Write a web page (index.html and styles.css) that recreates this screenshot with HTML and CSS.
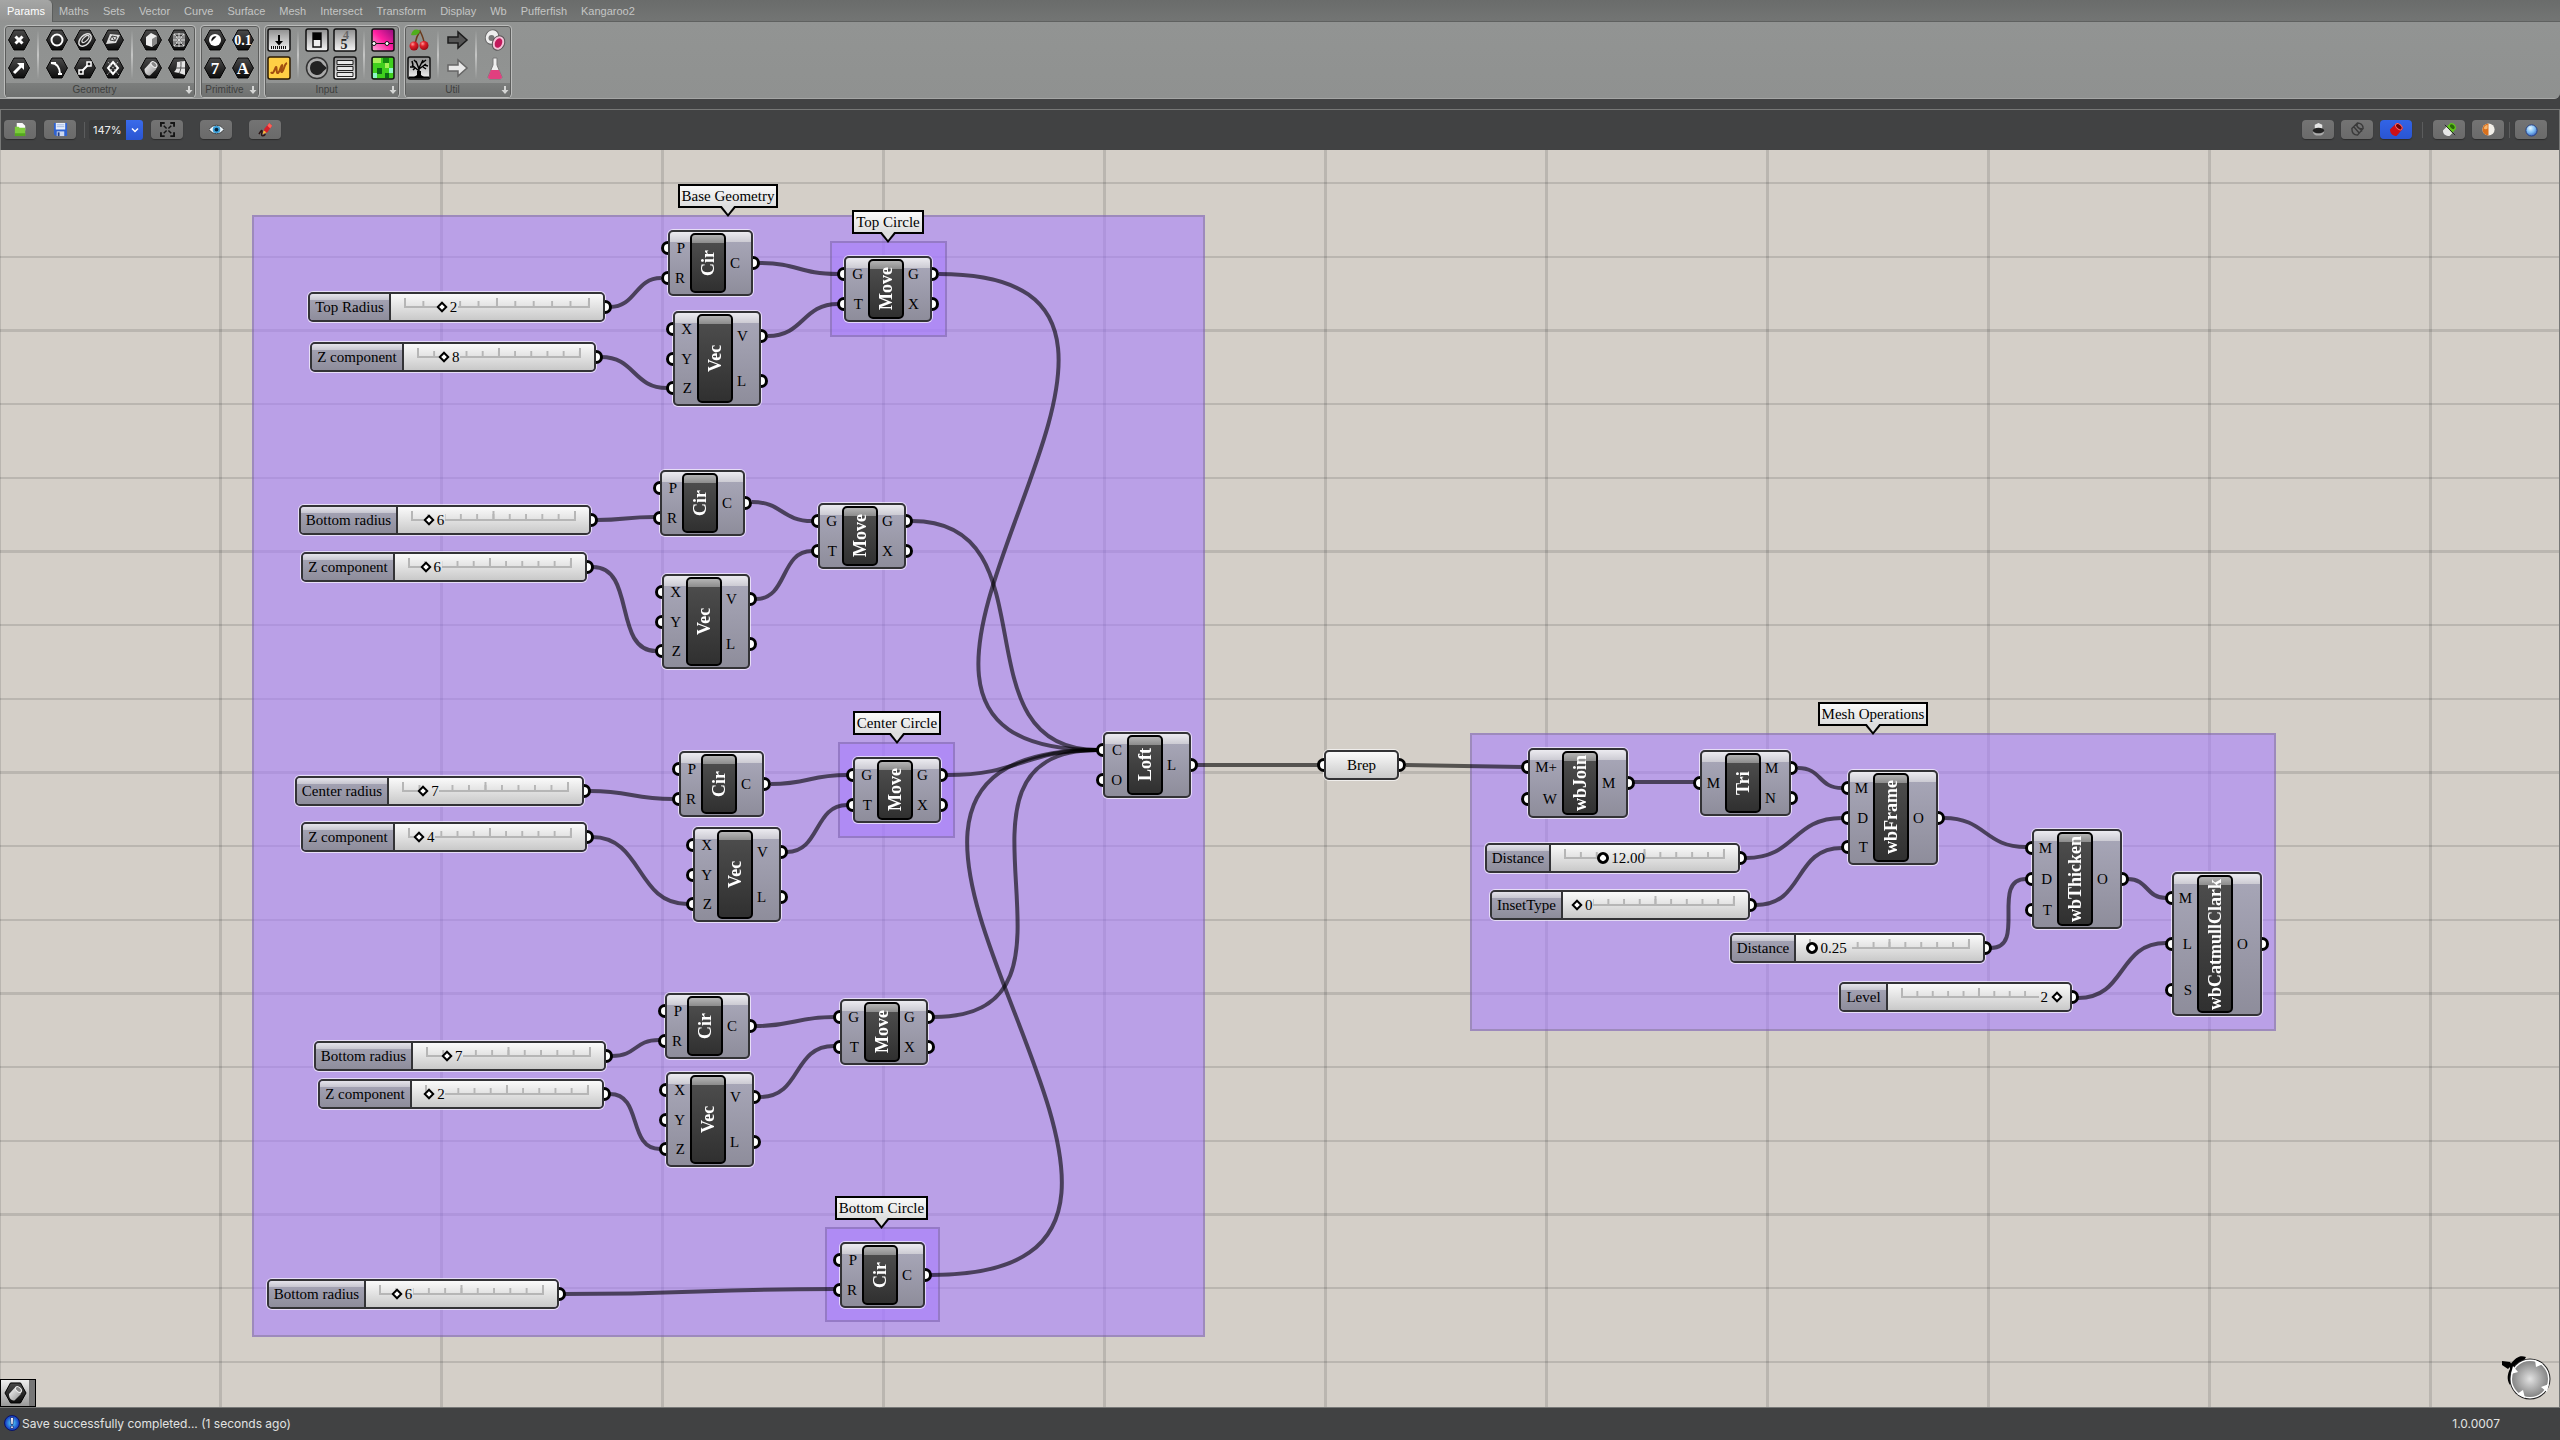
FILE: index.html
```html
<!DOCTYPE html>
<html lang="en">
<head>
<meta charset="utf-8">
<title>Grasshopper</title>
<link rel="stylesheet" href="styles.css">
</head>
<body>
<svg class="defs" aria-hidden="true">
  <defs>
    <linearGradient id="g-hex" x1="0" y1="0" x2="0" y2="1"><stop offset="0" stop-color="#4a4a4a"/><stop offset="1" stop-color="#0c0c0c"/></linearGradient>
    <linearGradient id="g-metal" x1="0" y1="0" x2="1" y2="1"><stop offset="0" stop-color="#fff"/><stop offset="1" stop-color="#8a8a8a"/></linearGradient>
    <linearGradient id="g-box" x1="0" y1="0" x2="0" y2="1"><stop offset="0" stop-color="#8e8e8e"/><stop offset="1" stop-color="#f6f6f6"/></linearGradient>
    <linearGradient id="g-pink" x1="0" y1="1" x2="1" y2="0"><stop offset="0" stop-color="#ffb0dc"/><stop offset=".5" stop-color="#ff1fa0"/><stop offset="1" stop-color="#8b0d7c"/></linearGradient>
    <radialGradient id="g-cherry" cx=".35" cy=".3" r=".8"><stop offset="0" stop-color="#ff9a9a"/><stop offset=".35" stop-color="#e0202a"/><stop offset="1" stop-color="#8c0510"/></radialGradient>
    <radialGradient id="g-blue" cx=".4" cy=".3" r=".8"><stop offset="0" stop-color="#e4f6ff"/><stop offset=".5" stop-color="#7dbcf4"/><stop offset="1" stop-color="#2c4fae"/></radialGradient>
    <radialGradient id="g-info"><stop offset="0" stop-color="#58e0ff"/><stop offset="1" stop-color="#1030c0"/></radialGradient>
    <radialGradient id="g-dial"><stop offset="0" stop-color="#e2e2e2"/><stop offset="1" stop-color="#858585"/></radialGradient>
    <symbol id="hex" viewBox="0 0 24 24"><path d="M6.500 1.500h11L23.300 12l-5.800 10.500h-11L.7 12z" fill="#b9bab9"/><path d="M7 2h10l5.500 10L17 22H7L1.500 12z" fill="url(#g-hex)" stroke="#000"/></symbol>
    <symbol id="barrel" viewBox="0 0 24 24"><path d="M5.500 13l6.500-7 6 4.500-1 3-6 6c-4 0-5.500-2.500-5.500-6.500z" fill="url(#g-metal)"/><ellipse cx="15" cy="8.500" rx="3.500" ry="2.200" transform="rotate(42 15 8.500)" fill="#888" stroke="#eee"/></symbol>
    <symbol id="tile" viewBox="0 0 24 24"><rect x="1" y="1" width="22" height="22" rx="2" fill="url(#g-box)" stroke="#111" stroke-width="1.500"/></symbol>
    <symbol id="more" viewBox="0 0 8 8"><path d="M3 0h2v4h2.500L4 8 .5 4H3z" fill="#d5d6d5"/></symbol>
  </defs>
</svg>

<header class="ribbon">
  <nav class="tabs">
    <button class="tab active">Params</button><button class="tab">Maths</button><button class="tab">Sets</button><button class="tab">Vector</button><button class="tab">Curve</button><button class="tab">Surface</button><button class="tab">Mesh</button><button class="tab">Intersect</button><button class="tab">Transform</button><button class="tab">Display</button><button class="tab">Wb</button><button class="tab">Pufferfish</button><button class="tab">Kangaroo2</button>
  </nav>
  <div class="panels">
    <section class="panel">
      <div class="tools">
        <div class="tool-cols">
          <button aria-label="Point"><svg viewBox="0 0 24 24"><use href="#hex"/><path d="M8.500 8.500l7 7m0-7l-7 7" stroke="#fff" stroke-width="3"/></svg></button>
          <button aria-label="Vector"><svg viewBox="0 0 24 24"><use href="#hex"/><path d="M7 17l7-7" stroke="#fff" stroke-width="3"/><path d="M10 7h7v7z" fill="#fff"/></svg></button>
        </div>
        <div class="tool-cols">
          <button aria-label="Circle"><svg viewBox="0 0 24 24"><use href="#hex"/><circle cx="12" cy="12" r="5.500" fill="none" stroke="#fff" stroke-width="2"/></svg></button>
          <button aria-label="Arc"><svg viewBox="0 0 24 24"><use href="#hex"/><path d="M6 7c6 0 9 5 9 11M6 7h5M13 18h4" fill="none" stroke="#fff" stroke-width="2"/></svg></button>
          <button aria-label="Curve"><svg viewBox="0 0 24 24"><use href="#hex"/><ellipse cx="12" cy="12" rx="7.500" ry="4.500" transform="rotate(-45 12 12)" fill="none" stroke="#ddd" stroke-width="1.500"/><ellipse cx="12.500" cy="11" rx="4.500" ry="2" transform="rotate(-45 12.500 11)" fill="none" stroke="#ddd" stroke-width="1.300"/></svg></button>
          <button aria-label="Line"><svg viewBox="0 0 24 24"><use href="#hex"/><path d="M8 16l8-8" stroke="#fff" stroke-width="2"/><path d="M6 14h4v4H6zM14 6h4v4h-4z" fill="#222" stroke="#fff" stroke-width="1.500"/></svg></button>
          <button aria-label="Plane"><svg viewBox="0 0 24 24"><use href="#hex"/><path d="M5 16l4-10 10 1-4 8z" fill="#ddd"/><path d="M9 12l2-4 5 1-2 4zM11 8l3 5" fill="none" stroke="#444"/></svg></button>
          <button aria-label="Rectangle"><svg viewBox="0 0 24 24"><use href="#hex"/><path d="M12 6l5 6-5 6-5-6z" fill="none" stroke="#fff" stroke-width="2"/><path d="M7 6l11 13M17 6L6 19" stroke="#aaa" stroke-dasharray="2 1"/></svg></button>
        </div>
        <div class="tool-cols">
          <button aria-label="Box"><svg viewBox="0 0 24 24"><use href="#hex"/><path d="M7 9l5-4 6 3v7l-5 4-6-2z" fill="#eee"/><path d="M13 11l5-3v7l-5 4z" fill="#888"/></svg></button>
          <button aria-label="Brep"><svg viewBox="0 0 24 24"><use href="#hex"/><use href="#barrel"/></svg></button>
          <button aria-label="Mesh"><svg viewBox="0 0 24 24"><use href="#hex"/><path d="M7 6h10v12H7zM12 5v14M6 12h12M7 6l10 12M17 6L7 18M9 9h6v6H9z" fill="none" stroke="#ddd"/></svg></button>
          <button aria-label="Surface"><svg viewBox="0 0 24 24"><use href="#hex"/><path d="M7 16c3-2 3-7 3-10l8-1v14l-6-2z" fill="#e4e4e4"/><path d="M14 6c0 5 0 9-2 11M9 12h9" fill="none" stroke="#555"/></svg></button>
        </div>
      </div>
      <h2>Geometry</h2><svg class="more"><use href="#more"/></svg>
    </section>
    <section class="panel">
      <div class="tools">
        <div class="tool-cols">
          <button aria-label="Boolean"><svg viewBox="0 0 24 24"><use href="#hex"/><circle cx="12" cy="12" r="6" fill="#fff"/><path d="M8.500 13.500a4 4 0 0 1 5-5z" fill="#111"/></svg></button>
          <button aria-label="Integer"><svg viewBox="0 0 24 24"><use href="#hex"/><text x="12" y="18" class="glyph">7</text></svg></button>
          <button aria-label="Number"><svg viewBox="0 0 24 24"><use href="#hex"/><text x="12" y="17" class="glyph small">0.1</text></svg></button>
          <button aria-label="Text"><svg viewBox="0 0 24 24"><use href="#hex"/><text x="12" y="18" class="glyph">A</text></svg></button>
        </div>
      </div>
      <h2>Primitive</h2><svg class="more"><use href="#more"/></svg>
    </section>
    <section class="panel">
      <div class="tools">
        <div class="tool-cols">
          <button aria-label="Button"><svg viewBox="0 0 24 24"><use href="#tile"/><path d="M11 7h2v6h3l-4 4.500L8 13h3z"/><path d="M4 19.500h16" stroke="#111" stroke-width="3" stroke-dasharray="1 1"/></svg></button>
          <button aria-label="Panel"><svg viewBox="0 0 24 24"><rect x="1" y="1" width="22" height="22" rx="2" fill="#ffcf45" stroke="#2b1a00" stroke-width="1.500"/><path d="M4 16c2 4 4-4 5-5s0 7 2 6 3-8 4-8-2 8 0 7 2-8 5-9" fill="none" stroke="#a14e10" stroke-width="2"/></svg></button>
        </div>
        <div class="tool-cols">
          <button aria-label="Toggle"><svg viewBox="0 0 24 24"><use href="#tile"/><rect x="8" y="5" width="8" height="14" fill="#eee" stroke="#111" stroke-width="1.500"/><path d="M8 5h8v7H8z"/></svg></button>
          <button aria-label="Knob"><svg viewBox="0 0 24 24"><circle cx="12" cy="12" r="10.500" fill="#aaa" stroke="#333" stroke-width="1.500"/><path d="M5 12a7 7 0 0 1 13-3.500l4 3.500-4 3.500A7 7 0 0 1 5 12z" fill="#222"/></svg></button>
          <button aria-label="Digit scroller"><svg viewBox="0 0 24 24"><use href="#tile"/><text x="13" y="11" class="glyph dim">4</text><text x="11" y="21" class="glyph dark">5</text></svg></button>
          <button aria-label="Value list"><svg viewBox="0 0 24 24"><use href="#tile"/><path d="M4 4.500h16v4H4zM4 10.500h16v4H4zM4 16.500h16v4H4z" fill="#e9e9e9" stroke="#222"/></svg></button>
        </div>
        <div class="tool-cols">
          <button aria-label="Gradient"><svg viewBox="0 0 24 24"><rect x="1" y="1" width="22" height="22" rx="2" fill="url(#g-pink)" stroke="#111" stroke-width="1.500"/><path d="M2 15.500h20" stroke="#111"/><circle cx="3" cy="15.500" r="2" fill="#fff" stroke="#111"/><circle cx="16" cy="15.500" r="2" fill="#fff" stroke="#111"/></svg></button>
          <button aria-label="Colour swatch"><svg viewBox="0 0 24 24"><rect x="1" y="1" width="22" height="22" rx="2" fill="#3fcf1e" stroke="#111" stroke-width="1.500"/><path d="M2 2h8v5H2zM14 7h4v5h-4z" fill="#a5ef58"/><path d="M6 12h5v6H6zM14 17h4v5h-4z" fill="#0b6b14"/><path d="M18 12h4v5h-4zM2 17h4v5H2z" fill="#8ef7c8"/><path d="M12 2h6v5h-6z" fill="#138a10"/></svg></button>
        </div>
      </div>
      <h2>Input</h2><svg class="more"><use href="#more"/></svg>
    </section>
    <section class="panel">
      <div class="tools">
        <div class="tool-cols">
          <button aria-label="Cherry picker"><svg viewBox="0 0 24 24"><path d="M8 16C9 10 11 6 13 3c2 4 4 8 4 12" fill="none" stroke="#6a3a1c" stroke-width="1.500"/><path d="M13 3C9 0 5 2 4 7c4 1 8 0 9-4z" fill="#4fae1d"/><circle cx="7" cy="18" r="4.500" fill="url(#g-cherry)"/><circle cx="17" cy="17.500" r="4.500" fill="url(#g-cherry)"/></svg></button>
          <button aria-label="Param viewer"><svg viewBox="0 0 24 24"><use href="#tile"/><path d="M12 21v-8M12 15L5 9M12 13l7-5M12 13L9 5M12 12l4-8M7 11H3M6 9L5 5M17 9l4 1M15 7l4-3M10 7L7 4M8 12l-2 2M16 11l3 2" fill="none" stroke="#000" stroke-width="1.500"/><path d="M10 15h4v4l3 2H7l3-2z"/><path d="M2 21.500h20" stroke="#000" stroke-width="2"/></svg></button>
        </div>
        <div class="tool-cols">
          <button aria-label="Galapagos"><svg viewBox="0 0 24 24"><path d="M3 9h10V4l9 8-9 8v-5H3z" fill="#555" stroke="#1c1c1c" stroke-width="1.500"/></svg></button>
          <button aria-label="Relay"><svg viewBox="0 0 24 24"><path d="M3 9h10V4l9 8-9 8v-5H3z" fill="#e9e9e9" stroke="#666" stroke-width="1.500"/></svg></button>
        </div>
        <div class="tool-cols">
          <button aria-label="Cluster input"><svg viewBox="0 0 24 24"><ellipse cx="9" cy="9" rx="6.500" ry="7.500" transform="rotate(30 9 9)" fill="#eee" stroke="#666"/><circle cx="8.500" cy="10" r="3" fill="#777"/><ellipse cx="15.500" cy="15" rx="6" ry="7.500" transform="rotate(25 15.500 15)" fill="#f3c3d8" stroke="#555"/><ellipse cx="15.500" cy="15" rx="3.500" ry="5" transform="rotate(25 15.500 15)" fill="#c2185b"/></svg></button>
          <button aria-label="Fitness"><svg viewBox="0 0 24 24"><path d="M10 2h4v7l5 12c0 1-1 2-2 2H7c-1 0-2-1-2-2l5-12z" fill="#eee" stroke="#777"/><path d="M8 14h8l3 7c0 1-1 2-2 2H7c-1 0-2-1-2-2z" fill="#e0407f"/></svg></button>
        </div>
      </div>
      <h2>Util</h2><svg class="more"><use href="#more"/></svg>
    </section>
  </div>
</header>

<div class="toolbar">
  <button class="tb" aria-label="Open"><svg viewBox="0 0 16 16"><path d="M4 1h6l3 3v5H4z" fill="#fafafa"/><path d="M2 5h4l1 1h6v9H2z" fill="#7dcc3c"/><path d="M2 12h11v3H2z" fill="#55a81f"/></svg></button>
  <button class="tb" aria-label="Save"><svg viewBox="0 0 16 16"><path d="M1 1h14v14H3l-2-2z" fill="#2f62d0"/><path d="M3 1h10v7H3z" fill="#e8eefb"/><path d="M4 3h8M4 5h8" stroke="#9db4e0"/><path d="M4 10h8v5H4z" fill="#ccd8f0"/><path d="M5 11h2v4H5z" fill="#203c86"/></svg></button>
  <span class="sep"></span>
  <span class="zoom"><select aria-label="Zoom"><option>147%</option></select><span class="chev"><svg viewBox="0 0 10 10"><path d="M2 3.500l3 3 3-3" fill="none" stroke="#fff" stroke-width="1.500"/></svg></span></span>
  <button class="tb" aria-label="Zoom extents"><svg viewBox="0 0 16 16"><path d="M1 5V1h4M11 1h4v4M15 11v4h-4M5 15H1v-4" fill="none" stroke="#151515" stroke-width="2"/><path d="M4 4l3 3m2 2l3 3m0-8L9 7M7 9l-3 3" stroke="#151515" stroke-width="1.500"/></svg></button>
  <button class="tb gap" aria-label="Preview"><svg viewBox="0 0 16 16"><path d="M0 8c4-6 12-6 16 0-4 6-12 6-16 0z" fill="#eef6fb" stroke="#333"/><circle cx="8" cy="8" r="4" fill="#3b9fd8"/><circle cx="8" cy="8" r="2" fill="#06233a"/></svg></button>
  <button class="tb gap" aria-label="Sketch"><svg viewBox="0 0 16 16"><path d="M1 13c3-5 4-5 3-1s2 3 4 1" fill="none" stroke="#2a1414" stroke-width="1.500"/><path d="M5 13l2-6 5-6 3 3-5 7z" fill="#d4202a"/><path d="M12 1l3 3-2 3-3-3z" fill="#ff6258"/><path d="M5 13l1-4 3 2z" fill="#f2c23c"/></svg></button>
  <div class="views">
    <button class="tb" aria-label="No preview"><svg viewBox="0 0 16 16"><path d="M4 3l4-2 4 2v5H4z" fill="#e4e4e4"/><ellipse cx="8" cy="9" rx="6" ry="3" fill="#222"/><path d="M2 10c0 6 12 6 12 0-3 3-9 3-12 0z" fill="#aaa"/></svg></button>
    <button class="tb" aria-label="Wireframe preview"><svg viewBox="0 0 16 16"><path d="M2 7l6-6c3 0 6 2 6 6l-6 7c-4 0-6-3-6-7zM4 5l6 7M8 2c-2 3 2 6 5 5M6 3l7 7" fill="none" stroke="#3a3a3a" stroke-width="1.500"/></svg></button>
    <button class="tb on" aria-label="Shaded preview"><svg viewBox="0 0 16 16"><path d="M1 8l7-7c3 0 6 2 7 6l-7 8c-4 0-7-3-7-7z" fill="#cc1018"/><ellipse cx="10.500" cy="5" rx="4" ry="2.500" transform="rotate(42 10.500 5)" fill="#6e0408" stroke="#ff6a6a"/></svg></button>
    <span class="sep"></span>
    <button class="tb" aria-label="Selected only"><svg viewBox="0 0 16 16"><path d="M1 9l4-4 7 6-4 4c-4 0-7-2-7-6z" fill="#e6e6e6"/><path d="M5 5l4-4c4 0 6 2 6 6l-4 5z" fill="#5fc41c"/><ellipse cx="11" cy="5" rx="3" ry="2" transform="rotate(42 11 5)" fill="#2a6a08"/><path d="M3 3l11 11" stroke="#222"/></svg></button>
    <button class="tb" aria-label="Material"><svg viewBox="0 0 16 16"><circle cx="8" cy="8" r="6.500" fill="#f2efe9"/><path d="M8 1.500a6.500 6.500 0 0 0 0 13z" fill="#d8701c"/><path d="M7 3a5 5 0 0 0-4 4c1 1 3 1 4 0z" fill="#f7b36a"/></svg></button>
    <span class="sep tight"></span>
    <button class="tb" aria-label="Quality"><svg viewBox="0 0 16 16"><circle cx="8" cy="9" r="6" fill="url(#g-blue)" stroke="#233b80"/></svg></button>
  </div>
</div>

<main class="canvas">
  <div class="group g-main"></div>
  <div class="group g-top"></div>
  <div class="group g-center"></div>
  <div class="group g-bottom"></div>
  <div class="group g-mesh"></div>

  <svg class="wires" aria-hidden="true">
    <g transform="translate(0 -150)">
      <path d="M610 307C636 307 635 278 661 278"/>
      <path d="M601 357C635 357 633 388 667 388"/>
      <path d="M759 263C799 263 798 274 838 274"/>
      <path d="M768 336C804 336 802 304 838 304"/>
      <path d="M939 274C1274 274 763 750 1098 750"/>
      <path d="M597 520C625 520 626 517 654 517"/>
      <path d="M593 567C636 567 613 651 656 651"/>
      <path d="M752 502C782 502 782 521 812 521"/>
      <path d="M756 599C788 599 780 551 812 551"/>
      <path d="M912 521C1056 521 954 750 1098 750"/>
      <path d="M590 791C631 791 632 799 673 799"/>
      <path d="M592 837C643 837 636 904 687 904"/>
      <path d="M771 784C809 784 809 775 847 775"/>
      <path d="M787 852C820 852 814 805 847 805"/>
      <path d="M947 775C1022 775 1022 750 1098 750"/>
      <path d="M612 1056C637 1056 634 1040 659 1040"/>
      <path d="M610 1094C643 1094 627 1149 660 1149"/>
      <path d="M756 1026C795 1026 795 1017 834 1017"/>
      <path d="M760 1097C802 1097 792 1046 834 1046"/>
      <path d="M934 1017C1114 1017 918 750 1098 750"/>
      <path d="M564 1294C699 1294 699 1289 834 1289"/>
      <path d="M931 1275C1302 1275 727 750 1098 750"/>
      <path d="M1197 765H1318"/>
      <path d="M1406 765L1522 767"/>
      <path d="M1634 782H1694"/>
      <path d="M1798 768C1822 768 1818 788 1842 788"/>
      <path d="M1746 858C1796 858 1792 818 1842 818"/>
      <path d="M1756 905C1805 905 1793 848 1842 848"/>
      <path d="M1944 818C1986 818 1984 847 2026 847"/>
      <path d="M1991 948C2027 948 1990 879 2026 879"/>
      <path d="M2128 879C2148 879 2146 898 2166 898"/>
      <path d="M2078 998C2127 998 2117 943 2166 943"/>
    </g>
  </svg>

  <div class="callout c-base">Base Geometry</div>
  <div class="callout c-top">Top Circle</div>
  <div class="callout c-center">Center Circle</div>
  <div class="callout c-bottom">Bottom Circle</div>
  <div class="callout c-mesh">Mesh Operations</div>

  <div class="slider s-1" style="--v:.2"><label for="s1">Top Radius</label><div class="track"><input type="range" id="s1" min="0" max="10" value="2"><output for="s1">2</output></div></div>
  <div class="slider s-2" style="--v:.16"><label for="s2">Z component</label><div class="track"><input type="range" id="s2" min="0" max="50" value="8"><output for="s2">8</output></div></div>
  <div class="slider s-3" style="--v:.102"><label for="s3">Bottom radius</label><div class="track"><input type="range" id="s3" min="1" max="50" value="6"><output for="s3">6</output></div></div>
  <div class="slider s-4" style="--v:.102"><label for="s4">Z component</label><div class="track"><input type="range" id="s4" min="1" max="50" value="6"><output for="s4">6</output></div></div>
  <div class="slider s-5" style="--v:.122"><label for="s5">Center radius</label><div class="track"><input type="range" id="s5" min="1" max="50" value="7"><output for="s5">7</output></div></div>
  <div class="slider s-6" style="--v:.061"><label for="s6">Z component</label><div class="track"><input type="range" id="s6" min="1" max="50" value="4"><output for="s6">4</output></div></div>
  <div class="slider s-7" style="--v:.122"><label for="s7">Bottom radius</label><div class="track"><input type="range" id="s7" min="1" max="50" value="7"><output for="s7">7</output></div></div>
  <div class="slider s-8" style="--v:.02"><label for="s8">Z component</label><div class="track"><input type="range" id="s8" min="1" max="50" value="2"><output for="s8">2</output></div></div>
  <div class="slider s-9" style="--v:.102"><label for="s9">Bottom radius</label><div class="track"><input type="range" id="s9" min="1" max="50" value="6"><output for="s9">6</output></div></div>
  <div class="slider float s-10" style="--v:.24"><label for="s10">Distance</label><div class="track"><input type="range" id="s10" min="0" max="50" step="0.01" value="12"><output for="s10">12.00</output></div></div>
  <div class="slider s-11" style="--v:0"><label for="s11">InsetType</label><div class="track"><input type="range" id="s11" min="0" max="5" value="0"><output for="s11">0</output></div></div>
  <div class="slider float s-12" style="--v:.016"><label for="s12">Distance</label><div class="track"><input type="range" id="s12" min="0" max="16" step="0.01" value="0.25"><output for="s12">0.25</output></div></div>
  <div class="slider flip s-13" style="--v:1"><label for="s13">Level</label><div class="track"><input type="range" id="s13" min="0" max="2" value="2"><output for="s13">2</output></div></div>

  <article class="node cir n-cir1"><ul class="in"><li>P</li><li>R</li></ul><h3>Cir</h3><ul class="out"><li>C</li></ul></article>
  <article class="node vec n-vec1"><ul class="in"><li>X</li><li>Y</li><li>Z</li></ul><h3>Vec</h3><ul class="out"><li>V</li><li>L</li></ul></article>
  <article class="node move n-move1"><ul class="in"><li>G</li><li>T</li></ul><h3>Move</h3><ul class="out"><li>G</li><li>X</li></ul></article>
  <article class="node cir n-cir2"><ul class="in"><li>P</li><li>R</li></ul><h3>Cir</h3><ul class="out"><li>C</li></ul></article>
  <article class="node vec n-vec2"><ul class="in"><li>X</li><li>Y</li><li>Z</li></ul><h3>Vec</h3><ul class="out"><li>V</li><li>L</li></ul></article>
  <article class="node move n-move2"><ul class="in"><li>G</li><li>T</li></ul><h3>Move</h3><ul class="out"><li>G</li><li>X</li></ul></article>
  <article class="node cir n-cir3"><ul class="in"><li>P</li><li>R</li></ul><h3>Cir</h3><ul class="out"><li>C</li></ul></article>
  <article class="node vec n-vec3"><ul class="in"><li>X</li><li>Y</li><li>Z</li></ul><h3>Vec</h3><ul class="out"><li>V</li><li>L</li></ul></article>
  <article class="node move n-move3"><ul class="in"><li>G</li><li>T</li></ul><h3>Move</h3><ul class="out"><li>G</li><li>X</li></ul></article>
  <article class="node cir n-cir4"><ul class="in"><li>P</li><li>R</li></ul><h3>Cir</h3><ul class="out"><li>C</li></ul></article>
  <article class="node vec n-vec4"><ul class="in"><li>X</li><li>Y</li><li>Z</li></ul><h3>Vec</h3><ul class="out"><li>V</li><li>L</li></ul></article>
  <article class="node move n-move4"><ul class="in"><li>G</li><li>T</li></ul><h3>Move</h3><ul class="out"><li>G</li><li>X</li></ul></article>
  <article class="node cir n-cir5"><ul class="in"><li>P</li><li>R</li></ul><h3>Cir</h3><ul class="out"><li>C</li></ul></article>
  <article class="node move n-loft"><ul class="in"><li>C</li><li>O</li></ul><h3>Loft</h3><ul class="out"><li>L</li></ul></article>
  <article class="node brep n-brep"><span class="port left"></span>Brep<span class="port right"></span></article>
  <article class="node join n-join"><ul class="in"><li>M+</li><li>W</li></ul><h3>wbJoin</h3><ul class="out"><li>M</li></ul></article>
  <article class="node tri n-tri"><ul class="in"><li>M</li></ul><h3>Tri</h3><ul class="out"><li>M</li><li>N</li></ul></article>
  <article class="node frame n-frame"><ul class="in"><li>M</li><li>D</li><li>T</li></ul><h3>wbFrame</h3><ul class="out"><li>O</li></ul></article>
  <article class="node thicken n-thicken"><ul class="in"><li>M</li><li>D</li><li>T</li></ul><h3>wbThicken</h3><ul class="out"><li>O</li></ul></article>
  <article class="node catmull n-catmull"><ul class="in"><li>M</li><li>L</li><li>S</li></ul><h3>wbCatmullClark</h3><ul class="out"><li>O</li></ul></article>

  <button class="recent" aria-label="Brep"><svg viewBox="0 0 24 24"><use href="#hex"/><use href="#barrel"/></svg></button>
  <svg class="compass" viewBox="0 0 56 48">
    <path d="M5 6l8 1 2 3-4 4-6-4zM13 10c6-8 10-10 16-8L13 30c-4-6-2-12 0-16z"/>
    <circle cx="33" cy="24" r="20.500" fill="#222"/><circle cx="33" cy="24" r="19.500" fill="#fff"/><circle cx="33" cy="24" r="18" fill="url(#g-dial)"/>
    <path d="M38 5l8 4-7 3zM52 29l-2 8-6-5zM28 43l-8-4 6-4zM14 19l2-8 5 6z" fill="#fff"/>
  </svg>
</main>

<footer class="status">
  <svg viewBox="0 0 16 16"><circle cx="8" cy="8" r="7.500" fill="url(#g-info)" stroke="#0a1466"/><path d="M6.500 2.500h3l-.5 7H7zM6.800 11h2.400v2.500H6.800z" fill="#fff" stroke="#0a1466" stroke-width=".7"/></svg>
  <span>Save successfully completed... (1 seconds ago)</span>
  <span class="version">1.0.0007</span>
</footer>
</body>
</html>
```
FILE: styles.css
```css
*, ::before, ::after { box-sizing: border-box; }
html, body { height: 100%; }
body {
  margin: 0;
  display: flex;
  flex-direction: column;
  background: #414243;
  font-family: "Liberation Sans", Arial, sans-serif;
  overflow: hidden;
}
button { padding: 0; border: 0; background: none; font: inherit; color: inherit; }
h2, h3, ul { margin: 0; padding: 0; font-weight: normal; list-style: none; }
.defs { position: absolute; width: 0; height: 0; }

/* ribbon */
.ribbon { background: #6f7170; border-radius: 0 0 6px 0; overflow: hidden; }
.tabs { display: flex; height: 22px; background: linear-gradient(#6a6c6b, #737574); border-bottom: 1px solid #5f6160; }
.tab { padding: 0 7px; font-size: 11px; line-height: 22px; color: #c4c5c4; }
.tab.active {
  height: 22px;
  margin-right: -1px;
  color: #fff;
  background: linear-gradient(#a5a6a5, #929392);
  border-radius: 0 5px 0 0;
  border-right: 1px solid #5b5d5c;
}
.panels {
  display: flex;
  gap: 4px;
  padding: 3px 4px 0;
  background: linear-gradient(#929493, #8f9190);
  border-bottom: 1px solid #a5a6a5;
}
.panel {
  position: relative;
  border: 1px solid #bcbdbc;
  border-radius: 4px;
  background: linear-gradient(#8f9190, #929493);
  box-shadow: inset 0 0 0 1px #5c5d5c;
  height: 73px;
}
.tools { display: flex; height: 57px; padding-right: 2px; }
.tool-cols { display: grid; grid-template-rows: 28px 28px; grid-auto-flow: column; grid-auto-columns: 28px; }
.tool-cols + .tool-cols { margin-left: 10px; position: relative; }
.tool-cols + .tool-cols::before {
  content: "";
  position: absolute;
  left: -6px;
  top: 4px;
  width: 2px;
  height: 50px;
  background: linear-gradient(#8f9190, #c4c5c4, #8f9190);
}
.tool-cols button { display: grid; place-items: center; }
.tool-cols svg { width: 24px; height: 24px; }
.glyph { font: bold 17px "Liberation Serif", serif; fill: #fff; text-anchor: middle; }
.glyph.small { font-size: 14px; }
.glyph.dim { font-size: 12px; fill: #666; }
.glyph.dark { font-size: 14px; fill: #222; }
.panel h2 {
  height: 14px;
  margin: 0 1px;
  padding-right: 11px;
  font-size: 10px;
  line-height: 13px;
  text-align: center;
  color: #3e3f3e;
  background: linear-gradient(#7c7e7d, #6f7170);
}
.more { position: absolute; right: 2px; bottom: 3px; width: 8px; height: 8px; }

/* canvas toolbar */
.toolbar {
  display: flex;
  align-items: center;
  gap: 8px;
  height: 41px;
  margin-top: 10px;
  padding: 0 12px 1px 3px;
  border: 1px solid #777877;
  border-width: 1px 1px 0;
}
.tb {
  width: 32px;
  height: 19px;
  display: grid;
  place-items: center;
  border-radius: 4px;
  background: linear-gradient(#747474, #6a6a6a);
  box-shadow: 0 1px 1px #2c2c2c;
}
.tb svg { width: 15px; height: 15px; }
.tb.on { background: linear-gradient(#3264e6, #2a55d2); }
.tb.gap { margin-left: 9px; }
.sep { width: 1px; height: 16px; background: #5b5c5d; }
.views { display: flex; align-items: center; gap: 7px; margin-left: auto; }
.views .sep { margin: 0 3px; }
.views .sep.tight { margin: 0 -2px; }
.zoom { display: flex; width: 54px; height: 20px; margin-left: -4px; border-radius: 3px; overflow: hidden; background: #38393a; }
.zoom select {
  flex: 1;
  width: 37px;
  padding: 0 0 0 4px;
  appearance: none;
  border: 0;
  background: none;
  color: #eee;
  font: 11px Inter, sans-serif;
}
.chev { width: 17px; display: grid; place-items: center; background: linear-gradient(#3a6bea, #2a55d2); }
.chev svg { width: 10px; height: 10px; }

/* canvas */
.canvas {
  position: relative;
  flex: 1;
  overflow: hidden;
  border: solid #777877;
  border-width: 0 1px 1px 0;
  background-color: #d4cfc8;
  background-image:
    linear-gradient(90deg, rgba(0,0,0,.12) 3px, transparent 3px),
    linear-gradient(rgba(0,0,0,.12) 2px, transparent 2px),
    linear-gradient(rgba(0,0,0,.12) 2px, transparent 2px),
    linear-gradient(rgba(0,0,0,.12) 3px, transparent 3px);
  background-size: 221px 221px;
  background-position: 219px 0, 0 32px, 0 106px, 0 179px;
  font: 15px/18px "Liberation Serif", "Times New Roman", serif;
  color: #000;
}
.group { position: absolute; background: rgba(166,123,255,.56); border: 2px solid rgba(70,70,60,.25); }
.g-main { left: 252px; top: 65px; width: 953px; height: 1122px; }
.g-top { left: 830px; top: 91px; width: 117px; height: 96px; }
.g-center { left: 838px; top: 592px; width: 117px; height: 96px; }
.g-bottom { left: 825px; top: 1077px; width: 115px; height: 95px; }
.g-mesh { left: 1470px; top: 583px; width: 806px; height: 298px; }

.wires { position: absolute; left: 0; top: 0; width: 100%; height: 100%; }
.wires path { fill: none; stroke: rgba(0,0,0,.6); stroke-width: 4; }

/* callouts */
.callout {
  position: absolute;
  height: 24px;
  line-height: 20px;
  text-align: center;
  white-space: nowrap;
  border: 2px solid #000;
  background: linear-gradient(#fafafa, #dedede);
}
.callout::before, .callout::after {
  content: "";
  position: absolute;
  left: 50%;
  top: 20px;
  width: 18px;
  height: 11px;
  margin-left: -9px;
  background: #000;
  clip-path: polygon(0 0, 100% 0, 50% 100%);
}
.callout::after { top: 19px; width: 14px; height: 9px; margin-left: -7px; background: #dedede; }
.c-base { left: 678px; top: 34px; width: 100px; }
.c-top { left: 852px; top: 60px; width: 72px; }
.c-center { left: 853px; top: 561px; width: 88px; }
.c-bottom { left: 835px; top: 1046px; width: 93px; }
.c-mesh { left: 1818px; top: 552px; width: 110px; }

/* components */
.node, .slider {
  position: absolute;
  border: 2px solid #333336;
  border-radius: 5px;
  box-shadow: 0 0 0 1px rgba(255,255,255,.65);
}
.node {
  display: grid;
  padding: 1px 0;
  background: linear-gradient(#ecebf0, #cccbd3 10px, #a6a5b6 10px, #8e8d9b);
}
.node ul { display: flex; flex-direction: column; }
.node li { position: relative; flex: 1; display: flex; align-items: center; }
.in li { justify-content: flex-end; padding-right: 5px; }
.out li { padding-left: 4px; }
.node h3 {
  display: flex;
  align-items: center;
  justify-content: center;
  writing-mode: vertical-rl;
  transform: rotate(180deg);
  border: 2px solid #000;
  border-radius: 5px;
  background: linear-gradient(0deg, #b4b4b4, #8c8c8c 8px, #4c4c4c 8px, #303030);
  color: #fff;
  font-size: 18px;
  font-weight: bold;
  line-height: 20px;
  white-space: nowrap;
}
.in li::before, .out li::after, .port, .slider::after {
  content: "";
  position: absolute;
  top: 50%;
  width: 7px;
  height: 14px;
  margin-top: -7px;
  border: 3px solid #000;
  background: #fff;
}
.in li::before, .port.left { left: -9px; border-right: 0; border-radius: 7px 0 0 7px; }
.out li::after, .port.right, .slider::after { right: -9px; border-left: 0; border-radius: 0 7px 7px 0; }

.cir { width: 85px; height: 66px; grid-template-columns: 20px 36px 1fr; }
.vec { width: 88px; height: 95px; grid-template-columns: 22px 36px 1fr; }
.move { width: 88px; height: 66px; grid-template-columns: 22px 36px 1fr; }
.join { width: 100px; height: 70px; grid-template-columns: 32px 36px 1fr; }
.tri { width: 91px; height: 66px; grid-template-columns: 23px 36px 1fr; }
.frame { width: 90px; height: 95px; grid-template-columns: 23px 36px 1fr; }
.thicken { width: 90px; height: 100px; grid-template-columns: 23px 36px 1fr; }
.catmull { width: 90px; height: 144px; grid-template-columns: 23px 36px 1fr; }
.brep { width: 75px; height: 30px; padding: 0; place-items: center; background: linear-gradient(#fafafa, #c9c9c9); }

.n-cir1 { left: 668px; top: 80px; }
.n-vec1 { left: 673px; top: 161px; }
.n-move1 { left: 844px; top: 106px; }
.n-cir2 { left: 660px; top: 320px; }
.n-vec2 { left: 662px; top: 424px; }
.n-move2 { left: 818px; top: 353px; }
.n-cir3 { left: 679px; top: 601px; }
.n-vec3 { left: 693px; top: 677px; }
.n-move3 { left: 853px; top: 607px; }
.n-cir4 { left: 665px; top: 843px; }
.n-vec4 { left: 666px; top: 922px; }
.n-move4 { left: 840px; top: 849px; }
.n-cir5 { left: 840px; top: 1092px; }
.n-loft { left: 1103px; top: 582px; }
.n-brep { left: 1324px; top: 600px; }
.n-join { left: 1528px; top: 598px; }
.n-tri { left: 1700px; top: 600px; }
.n-frame { left: 1848px; top: 620px; }
.n-thicken { left: 2032px; top: 679px; }
.n-catmull { left: 2172px; top: 722px; }

/* number sliders */
.slider { display: flex; height: 30px; }
.slider label {
  display: grid;
  place-items: center;
  border-right: 2px solid #333336;
  background: linear-gradient(#e4e3ea, #c6c5cf 6px, #a2a1b2 6px, #8e8d9b);
  white-space: nowrap;
  border-radius: 3px 0 0 3px;
}
.track {
  position: relative;
  flex: 1;
  padding: 0 9px 0 10px;
  border-radius: 0 3px 3px 0;
  background: linear-gradient(#fafafa, #c9c9c9);
}
.track::before {
  content: "";
  position: absolute;
  left: 13px;
  right: 13px;
  top: 4px;
  height: 10px;
  --tick: #b6b6b6;
  background:
    linear-gradient(90deg, var(--tick) 2px, transparent 2px) left bottom / calc((100% - 2px) / 10) 7px repeat-x,
    linear-gradient(90deg, var(--tick) 2px, transparent 2px) left bottom / calc((100% - 2px) / 2) 10px repeat-x,
    linear-gradient(var(--tick), var(--tick)) left bottom / 100% 2px no-repeat;
  --from: calc(var(--v) * 100%);
  --to: calc(var(--v) * 100% + 17px);
  mask: linear-gradient(90deg, #000 var(--from), transparent var(--from), transparent var(--to), #000 var(--to));
}
.float .track::before { --to: calc(var(--v) * 100% + 40px); }
.flip .track::before { --from: calc(100% - 18px); --to: 100%; }
.track input {
  position: relative;
  display: block;
  width: 100%;
  height: 26px;
  margin: 0;
  appearance: none;
  background: none;
}
.track input::-webkit-slider-thumb {
  appearance: none;
  box-sizing: border-box;
  width: 8px;
  height: 8px;
  border: 2px solid #000;
  background: #fff;
  transform: rotate(45deg);
}
.float .track { padding-left: 8px; }
.float .track input::-webkit-slider-thumb { width: 12px; height: 12px; border-width: 3px; border-radius: 6px; }
.track output { position: absolute; top: 4px; left: calc(22px + var(--v) * (100% - 28px)); pointer-events: none; }
.flip .track output { left: auto; right: 22px; }

.s-1 { left: 308px; top: 142px; width: 297px; } .s-1 label { width: 81px; }
.s-2 { left: 310px; top: 192px; width: 286px; } .s-2 label { width: 92px; }
.s-3 { left: 299px; top: 355px; width: 292px; } .s-3 label { width: 97px; }
.s-4 { left: 301px; top: 402px; width: 286px; } .s-4 label { width: 92px; }
.s-5 { left: 295px; top: 626px; width: 289px; } .s-5 label { width: 92px; }
.s-6 { left: 301px; top: 672px; width: 286px; } .s-6 label { width: 92px; }
.s-7 { left: 314px; top: 891px; width: 292px; } .s-7 label { width: 97px; }
.s-8 { left: 318px; top: 929px; width: 286px; } .s-8 label { width: 92px; }
.s-9 { left: 267px; top: 1129px; width: 292px; } .s-9 label { width: 97px; }
.s-10 { left: 1485px; top: 693px; width: 255px; } .s-10 label { width: 64px; }
.s-11 { left: 1490px; top: 740px; width: 260px; } .s-11 label { width: 71px; }
.s-12 { left: 1730px; top: 783px; width: 255px; } .s-12 label { width: 64px; }
.s-13 { left: 1839px; top: 832px; width: 233px; } .s-13 label { width: 47px; }

/* canvas widgets */
.recent {
  position: absolute;
  left: 0;
  bottom: 0;
  width: 36px;
  height: 28px;
  padding-left: 2px;
  border: 1px solid #000;
  background: linear-gradient(90deg, transparent 28px, #777 28px), linear-gradient(#eee, #999);
  text-align: left;
}
.recent svg { display: block; width: 25px; height: 24px; }
.compass { position: absolute; right: 6px; bottom: 4px; width: 56px; height: 48px; }

/* status bar */
.status {
  display: flex;
  align-items: center;
  gap: 2px;
  height: 32px;
  padding: 0 60px 2px 4px;
  font: 12px Inter, sans-serif;
  color: #e2e2e2;
}
.status svg { width: 16px; height: 16px; }
.version { margin-left: auto; }
```
